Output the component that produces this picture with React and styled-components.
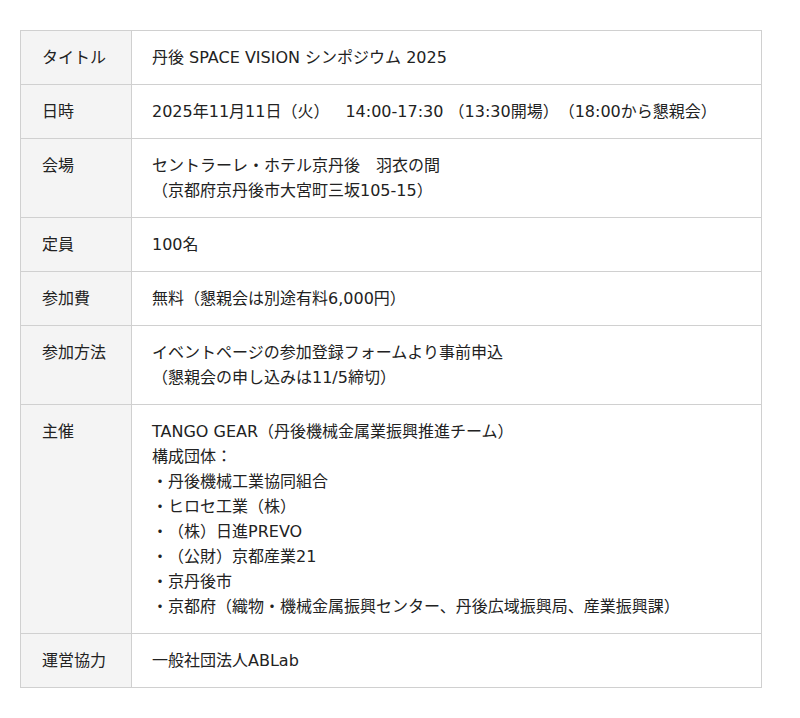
import React from "react";
import styled, { createGlobalStyle } from "styled-components";

const Global = createGlobalStyle`
  html, body { margin: 0; padding: 0; background: #fff; }
  body {
    font-family: "DejaVu Sans", "Noto Sans CJK JP", sans-serif;
    color: #222;
    text-spacing-trim: space-all;
  }
`;

const Wrap = styled.div`
  padding: 30px 38px 30px 20px;
`;

const Table = styled.table`
  width: 742px;
  border-collapse: collapse;
  font-size: 16px;
  line-height: 25px;
  text-spacing-trim: space-all;
`;

const Label = styled.th`
  width: 111px;
  box-sizing: border-box;
  text-align: left;
  vertical-align: top;
  font-weight: normal;
  background: #f4f4f4;
  border: 1px solid #d0d0d0;
  padding: 14px 20px 14px 21px;
  white-space: nowrap;
`;

const Value = styled.td`
  vertical-align: top;
  border: 1px solid #d0d0d0;
  padding: 14px 20px;
`;

const Line = styled.div``;

const rows = [
  ["タイトル", ["丹後 SPACE VISION シンポジウム 2025"]],
  ["日時", ["2025年11月11日（火）\u300014:00-17:30 （13:30開場）（18:00から懇親会）"]],
  ["会場", ["セントラーレ・ホテル京丹後\u3000羽衣の間", "（京都府京丹後市大宮町三坂105-15）"]],
  ["定員", ["100名"]],
  ["参加費", ["無料（懇親会は別途有料6,000円）"]],
  ["参加方法", ["イベントページの参加登録フォームより事前申込", "（懇親会の申し込みは11/5締切）"]],
  [
    "主催",
    [
      "TANGO GEAR（丹後機械金属業振興推進チーム）",
      "構成団体：",
      "・丹後機械工業協同組合",
      "・ヒロセ工業（株）",
      "・（株）日進PREVO",
      "・（公財）京都産業21",
      "・京丹後市",
      "・京都府（織物・機械金属振興センター、丹後広域振興局、産業振興課）",
    ],
  ],
  ["運営協力", ["一般社団法人ABLab"]],
];

export default function App() {
  return (
    <>
      <Global />
      <Wrap>
        <Table>
          <tbody>
            {rows.map(([label, lines]) => (
              <tr key={label}>
                <Label>{label}</Label>
                <Value>
                  {lines.map((l, i) => (
                    <Line key={i}>{l}</Line>
                  ))}
                </Value>
              </tr>
            ))}
          </tbody>
        </Table>
      </Wrap>
    </>
  );
}
